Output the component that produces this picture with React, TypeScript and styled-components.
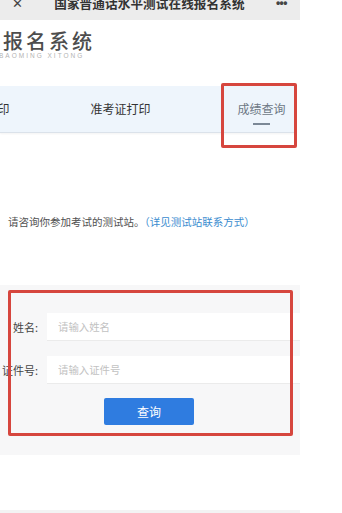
import React from 'react'
import styled, { createGlobalStyle } from 'styled-components'

const GlobalStyle = createGlobalStyle`
  html, body {
    margin: 0;
    padding: 0;
    background: #ffffff;
  }
  body {
    width: 342px;
    height: 513px;
    overflow: hidden;
    font-family: 'Noto Sans CJK SC', 'Noto Sans', sans-serif;
  }
`

const Page = styled.div`
  width: 300px;
  margin-top: -6px;
`

const TopBar = styled.div`
  height: 26px;
  background: #ececec;
  display: flex;
  align-items: flex-start;
  justify-content: space-between;
  padding: 0 13px 0 12px;
  box-sizing: border-box;
  color: #333;
  line-height: 18px;
`

const CloseIcon = styled.span`
  font-size: 13px;
  color: #444;
`

const BarTitle = styled.span`
  font-size: 12.6px;
  font-weight: 700;
  letter-spacing: 0.1px;
`

const MoreIcon = styled.span`
  font-family: 'Liberation Sans', sans-serif;
  font-size: 12px;
  font-weight: 700;
  letter-spacing: -0.5px;
  color: #444;
`

const Header = styled.div`
  margin-top: 10px;
  padding-left: 3px;
`

const Title = styled.div`
  font-size: 20px;
  line-height: 22px;
  letter-spacing: 3px;
  font-weight: 500;
  color: #4d4d4d;
`

const Subtitle = styled.div`
  margin-left: -4px;
  font-family: 'Liberation Sans', sans-serif;
  font-size: 6.5px;
  line-height: 8px;
  letter-spacing: 2px;
  color: #b3b3b3;
`

const TabWrap = styled.div`
  position: relative;
  width: 296px;
  margin-top: 26px;
`

const TabBar = styled.div`
  height: 47px;
  background: #eef5fc;
  border-bottom: 1px solid #dbe2ea;
  box-shadow: 0 1px 2px rgba(0, 0, 0, 0.05);
  overflow: hidden;
  box-sizing: border-box;
`

const TabStrip = styled.div`
  display: flex;
  height: 100%;
  margin-left: -91px;
`

const Tab = styled.div<{ $active?: boolean }>`
  position: relative;
  flex: 0 0 141px;
  display: flex;
  align-items: center;
  justify-content: center;
  font-size: 12px;
  color: ${({ $active }) => ($active ? '#6d7885' : '#333')};
  white-space: nowrap;
  padding-bottom: 1px;
  box-sizing: border-box;
`

const Underline = styled.span`
  position: absolute;
  left: 62px;
  top: 37px;
  width: 17px;
  height: 2px;
  background: #7b8896;
`

const Mark = styled.div`
  position: absolute;
  border: 3px solid #d6463e;
  border-radius: 2px;
  box-sizing: border-box;
  pointer-events: none;
`

const TabMark = styled(Mark)`
  left: 221px;
  top: -3px;
  width: 76px;
  height: 65px;
`

const Note = styled.p`
  margin: 81px 0 0;
  padding-left: 8px;
  font-size: 10.5px;
  line-height: 16px;
  color: #505050;
  white-space: nowrap;
`

const NoteLink = styled.span`
  color: #3a8ccf;
`

const FormSection = styled.div`
  position: relative;
  margin-top: 55px;
  height: 170px;
  background: #f7f7f8;
  padding-top: 28px;
  box-sizing: border-box;
`

const FormMark = styled(Mark)`
  left: 8px;
  top: 5px;
  width: 285px;
  height: 146px;
`

const Row = styled.div`
  display: flex;
  align-items: center;
  height: 28px;
  margin-bottom: 15px;
`

const Label = styled.label`
  flex: 0 0 38px;
  text-align: right;
  white-space: nowrap;
  direction: rtl;
  font-size: 11px;
  color: #444;
`

const LabelText = styled.span`
  direction: ltr;
  unicode-bidi: isolate;
`

const Input = styled.input`
  margin-left: 9px;
  flex: 1;
  height: 28px;
  box-sizing: border-box;
  border: none;
  border-bottom: 1px solid #ebebeb;
  background: #ffffff;
  padding: 0 11px;
  font-family: inherit;
  font-size: 10.4px;
  outline: none;
  &::placeholder {
    color: #c2c2c2;
  }
`

const ButtonRow = styled.div`
  display: flex;
  justify-content: flex-start;
  padding-left: 104px;
  margin-top: -1px;
`

const QueryButton = styled.button`
  width: 90px;
  height: 27px;
  border: none;
  border-radius: 2px;
  background: #2f7ce0;
  color: #ffffff;
  font-family: inherit;
  font-size: 12px;
  cursor: pointer;
`

const Footer = styled.div`
  margin-top: 55px;
  height: 10px;
  background: #f3f3f3;
`

const App: React.FC = () => {
  return (
    <>
      <GlobalStyle />
      <Page>
        <TopBar>
          <CloseIcon>✕</CloseIcon>
          <BarTitle>国家普通话水平测试在线报名系统</BarTitle>
          <MoreIcon>•••</MoreIcon>
        </TopBar>
        <Header>
          <Title>报名系统</Title>
          <Subtitle>BAOMING XITONG</Subtitle>
        </Header>
        <TabWrap>
          <TabBar>
            <TabStrip>
              <Tab>报名表打印</Tab>
              <Tab>准考证打印</Tab>
              <Tab $active>
                成绩查询
                <Underline />
              </Tab>
            </TabStrip>
          </TabBar>
          <TabMark />
        </TabWrap>
        <Note>
          请咨询你参加考试的测试站。<NoteLink>（详见测试站联系方式）</NoteLink>
        </Note>
        <FormSection>
          <Row>
            <Label>
              <LabelText>姓名:</LabelText>
            </Label>
            <Input placeholder="请输入姓名" />
          </Row>
          <Row>
            <Label>
              <LabelText>证件号:</LabelText>
            </Label>
            <Input placeholder="请输入证件号" />
          </Row>
          <ButtonRow>
            <QueryButton>查询</QueryButton>
          </ButtonRow>
          <FormMark />
        </FormSection>
        <Footer />
      </Page>
    </>
  )
}

export default App
